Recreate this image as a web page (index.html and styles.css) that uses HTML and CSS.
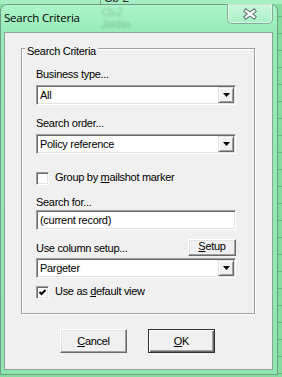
FILE: index.html
```html
<!DOCTYPE html>
<html>
<head>
  <title>Search Criteria</title>
  <link rel="stylesheet" href="styles.css">
</head>
<body>
  <div class="sheet-top"><span class="cell">Cb-2</span></div>

  <div class="window">
    <div class="titlebar">
      <span class="title">Search Criteria</span>
      <div class="ghost"><span>Cb-2</span><span>Jordan</span></div>
      <button class="close" title="Close">
        <svg width="16" height="12" viewBox="0 0 16 12">
          <path d="M4 3 L12 9 M12 3 L4 9" stroke="#5b6f65" stroke-width="4.2" stroke-linecap="square"/>
          <path d="M4 3 L12 9 M12 3 L4 9" stroke="#fff" stroke-width="2.2" stroke-linecap="square"/>
        </svg>
      </button>
    </div>

    <div class="client">
      <div class="group">
        <div class="group-title">Search Criteria</div>

        <div class="label first">Business type...</div>
        <div class="sunken combo">
          <span class="combo-text">All</span>
          <span class="drop"><svg width="7" height="4" viewBox="0 0 7 4"><polygon points="0,0 7,0 3.5,4" fill="#000"/></svg></span>
        </div>

        <div class="label">Search order...</div>
        <div class="sunken combo">
          <span class="combo-text">Policy reference</span>
          <span class="drop"><svg width="7" height="4" viewBox="0 0 7 4"><polygon points="0,0 7,0 3.5,4" fill="#000"/></svg></span>
        </div>

        <div class="check check-mailshot">
          <span class="box"></span>
          <span>Group by <u>m</u>ailshot marker</span>
        </div>

        <div class="label search-label">Search for...</div>
        <div class="sunken textbox">(current record)</div>

        <div class="setup-row">
          <span class="label">Use column setup...</span>
          <button class="btn small"><u>S</u>etup</button>
        </div>
        <div class="sunken combo column-combo">
          <span class="combo-text">Pargeter</span>
          <span class="drop"><svg width="7" height="4" viewBox="0 0 7 4"><polygon points="0,0 7,0 3.5,4" fill="#000"/></svg></span>
        </div>

        <div class="check check-default">
          <span class="box"><svg width="11" height="11" viewBox="0 0 11 11"><polyline points="2.5,5 4.5,7 8.5,3" fill="none" stroke="#000" stroke-width="2"/></svg></span>
          <span>Use as <u>d</u>efault view</span>
        </div>
      </div>

      <div class="actions">
        <button class="btn push"><u>C</u>ancel</button>
        <button class="btn push default"><u>O</u>K</button>
      </div>
    </div>
  </div>
</body>
</html>
```

FILE: styles.css
```css
body {
  margin: 0;
  width: 282px;
  height: 377px;
  overflow: hidden;
  background: #84dc9e repeating-linear-gradient(to bottom, transparent 0 16px, #63bb81 16px 17px);
  font-family: "Liberation Sans", Arial, sans-serif;
  font-size: 11px;
  letter-spacing: -0.3px;
  color: #000;
}
.sheet-top {
  height: 4px;
  overflow: hidden;
  background: #a6efc3;
}
.sheet-top .cell {
  display: block;
  height: 14px;
  margin: -9px 0 0 100px;
  padding-left: 3px;
  border-left: 1px solid #7d9c8b;
  font-size: 12px;
  line-height: 14px;
  color: #333;
}
.window {
  width: 278px;
  height: 371px;
  box-sizing: border-box;
  border: 1px solid #6c9f84;
  border-radius: 7px 7px 0 0;
  padding: 0 4px 4px 3px;
  background: linear-gradient(to bottom, #adf3ca 0, #97ebb8 28px, #8fe6b0 100%);
}
.titlebar {
  display: flex;
  align-items: flex-start;
  height: 27px;
}
.title {
  margin-top: 5px;
  font-family: "Open Sans", "Noto Sans", sans-serif;
  font-size: 11.5px;
  line-height: 15px;
  letter-spacing: -0.2px;
}
.ghost {
  display: flex;
  flex-direction: column;
  margin: 2px 0 0 22px;
  font-size: 10px;
  line-height: 12px;
  color: rgba(40, 95, 60, 0.3);
  filter: blur(1.2px);
}
.close {
  display: flex;
  align-items: center;
  justify-content: center;
  width: 46px;
  height: 20px;
  margin: -1px 0 0 auto;
  padding: 0;
  box-sizing: border-box;
  border: 1px solid #80ad96;
  border-top: none;
  border-radius: 0 0 5px 5px;
  background: linear-gradient(rgba(255, 255, 255, 0.35), rgba(255, 255, 255, 0.1));
  box-shadow: inset 0 0 0 1px rgba(255, 255, 255, 0.55);
}
.close svg {
  display: block;
}
.client {
  width: 269px;
  height: 338px;
  box-sizing: border-box;
  border: 1px solid #8aa396;
  background: #f0f0f0;
}
.group {
  width: 234px;
  height: 266px;
  box-sizing: border-box;
  margin: 15px 0 0 16px;
  padding: 0 18px 0 14px;
  border: 1px solid #a0a0a0;
  box-shadow: inset 1px 1px #fff, 1px 1px #fff;
}
.group-title {
  width: fit-content;
  margin: -4px 0 0 -11px;
  padding: 0 2px;
  background: #f0f0f0;
  line-height: 13px;
}
.label {
  display: block;
  line-height: 13px;
  margin-top: 12px;
}
.label.first {
  margin-top: 10px;
}
.sunken {
  display: flex;
  align-items: center;
  height: 20px;
  box-sizing: border-box;
  padding: 1px;
  border: 1px solid;
  border-color: #a0a0a0 #fff #fff #a0a0a0;
  box-shadow: inset 1px 1px #696969, inset -1px -1px #e3e3e3;
  background: #fff;
  line-height: 13px;
  white-space: nowrap;
}
.combo {
  margin-top: 4px;
}
.combo-text {
  flex: 1;
  padding-left: 2px;
}
.drop {
  display: flex;
  align-items: center;
  justify-content: center;
  width: 16px;
  height: 16px;
  box-sizing: border-box;
  border: 1px solid;
  border-color: #e3e3e3 #696969 #696969 #e3e3e3;
  box-shadow: inset 1px 1px #fff, inset -1px -1px #a0a0a0;
  background: #f0f0f0;
}
.drop svg {
  display: block;
}
.check {
  display: flex;
  align-items: flex-start;
  gap: 6px;
  line-height: 13px;
}
.check-mailshot {
  margin-top: 17px;
}
.check-default {
  margin-top: 7px;
}
.box {
  width: 13px;
  height: 13px;
  box-sizing: border-box;
  margin-top: 1px;
  border: 1px solid;
  border-color: #a0a0a0 #fff #fff #a0a0a0;
  box-shadow: inset 1px 1px #696969, inset -1px -1px #e3e3e3;
  background: #fff;
}
.box svg {
  display: block;
}
.label.search-label {
  margin-top: 11px;
}
.textbox {
  margin-top: 1px;
  padding-left: 3px;
}
.setup-row {
  display: flex;
  justify-content: space-between;
  align-items: flex-start;
  margin-top: 9px;
}
.setup-row .label {
  margin-top: 3px;
}
.column-combo {
  margin-top: 2px;
}
.btn {
  padding: 0;
  box-sizing: border-box;
  border: 1px solid;
  border-color: #fff #696969 #696969 #fff;
  box-shadow: inset -1px -1px #a0a0a0, inset 1px 1px #e3e3e3;
  background: #f0f0f0;
  color: #000;
  font-family: inherit;
  font-size: 11px;
  letter-spacing: inherit;
  line-height: 13px;
}
.btn.small {
  width: 48px;
  height: 17px;
  padding-bottom: 2px;
}
.actions {
  display: flex;
  justify-content: center;
  gap: 21px;
  margin-top: 15px;
  padding-right: 2px;
}
.btn.push {
  width: 67px;
  height: 24px;
  padding-top: 1px;
}
.btn.default {
  border-color: #333;
  box-shadow: inset 1px 1px #fff, inset -1px -1px #696969, inset -2px -2px #a0a0a0;
}
```
